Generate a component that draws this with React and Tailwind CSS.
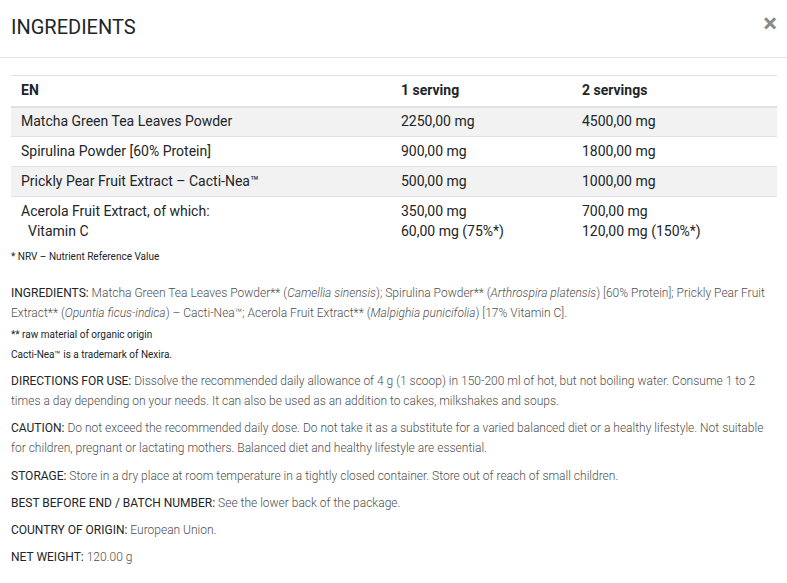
export default function App() {
  const rows = [
    ["Matcha Green Tea Leaves Powder", "2250,00 mg", "4500,00 mg", true],
    ["Spirulina Powder [60% Protein]", "900,00 mg", "1800,00 mg", false],
    ["Prickly Pear Fruit Extract – Cacti-Nea™", "500,00 mg", "1000,00 mg", true],
  ];
  const lbl = "text-[#212529] font-normal";
  return (
    <div className="w-[787px] h-[583px] bg-white overflow-hidden" style={{ fontFamily: "Roboto, sans-serif" }}>
      <div className="flex items-center justify-between h-[58px] border-b border-[#e5e5e5] pl-[11px] pr-[10px]">
        <h1 className="text-[20px] text-[#212529] font-normal leading-none -mt-[3px]">INGREDIENTS</h1>
        <span className="text-[#8a8a8a] text-[26px] font-bold leading-none -mt-[12px]">×</span>
      </div>
      <div className="px-[11px] pt-[17px]">
        <table className="w-[766px] border-collapse text-[14px] text-[#212529]">
          <thead>
            <tr className="border-t border-[#dee2e6] border-b-2">
              <th className="text-left font-bold px-[10px] h-[31px] w-[380px] align-middle">EN</th>
              <th className="text-left font-bold px-[10px] h-[31px] w-[181px] align-middle">1 serving</th>
              <th className="text-left font-bold px-[10px] h-[31px] align-middle">2 servings</th>
            </tr>
          </thead>
          <tbody>
            {rows.map(([a, b, c, s], i) => (
              <tr key={i} className={`border-t border-[#dee2e6] ${s ? "bg-[#f2f2f2]" : ""}`}>
                <td className="px-[10px] h-[30px] align-middle">{a}</td>
                <td className="px-[10px] h-[30px] align-middle">{b}</td>
                <td className="px-[10px] h-[30px] align-middle">{c}</td>
              </tr>
            ))}
            <tr className="border-t border-[#dee2e6]">
              <td className="px-[10px] pt-[4px] leading-[20px] align-top">
                Acerola Fruit Extract, of which:<br />
                <span className="pl-[7px]">Vitamin C</span>
              </td>
              <td className="px-[10px] pt-[4px] leading-[20px] align-top">350,00 mg<br />60,00 mg (75%*)</td>
              <td className="px-[10px] pt-[4px] leading-[20px] align-top">700,00 mg<br />120,00 mg (150%*)</td>
            </tr>
          </tbody>
        </table>
        <p className="text-[10px] text-[#212529] mt-[9px] leading-[14px]">* NRV – Nutrient Reference Value</p>
        <div className="text-[12px] text-[#4f4f4f] font-light leading-[20px] mt-[19px]">
          <p className="mb-[2px]">
            <span className={lbl}>INGREDIENTS:</span> Matcha Green Tea Leaves Powder** (<i>Camellia sinensis</i>); Spirulina Powder** (<i>Arthrospira platensis</i>) [60% Protein]; Prickly Pear Fruit Extract** (<i>Opuntia ficus-indica</i>) – Cacti-Nea™; Acerola Fruit Extract** (<i>Malpighia punicifolia</i>) [17% Vitamin C].
          </p>
          <p className="text-[10px] text-[#212529] font-normal leading-[20px]">** raw material of organic origin</p>
          <p className="text-[10px] text-[#212529] font-normal leading-[20px] mb-[6px]">Cacti-Nea™ is a trademark of Nexira.</p>
          <p className="mb-[7px]"><span className={lbl}>DIRECTIONS FOR USE:</span> Dissolve the recommended daily allowance of 4 g (1 scoop) in 150-200 ml of hot, but not boiling water. Consume 1 to 2 times a day depending on your needs. It can also be used as an addition to cakes, milkshakes and soups.</p>
          <p className="mb-[8px]"><span className={lbl}>CAUTION:</span> Do not exceed the recommended daily dose. Do not take it as a substitute for a varied balanced diet or a healthy lifestyle. Not suitable for children, pregnant or lactating mothers. Balanced diet and healthy lifestyle are essential.</p>
          <p className="mb-[7px]"><span className={lbl}>STORAGE:</span> Store in a dry place at room temperature in a tightly closed container. Store out of reach of small children.</p>
          <p className="mb-[7px]"><span className={lbl}>BEST BEFORE END / BATCH NUMBER:</span> See the lower back of the package.</p>
          <p className="mb-[7px]"><span className={lbl}>COUNTRY OF ORIGIN:</span> European Union.</p>
          <p className="mb-[7px]"><span className={lbl}>NET WEIGHT:</span> 120.00 g</p>
        </div>
      </div>
    </div>
  );
}
